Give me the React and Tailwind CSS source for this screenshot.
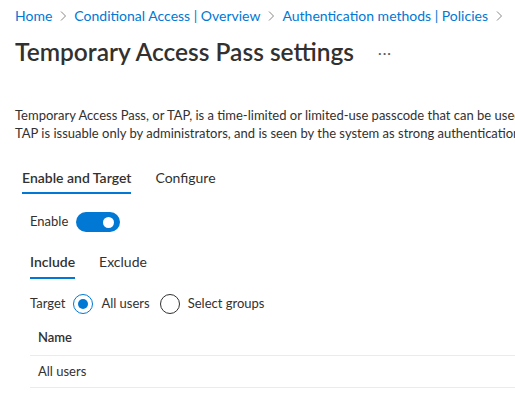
import React from 'react';

const Chevron = () => (
    <svg width="8" height="12" viewBox="0 0 8 12" className="mx-[7px] shrink-0">
        <path d="M2 1.5 L6.5 6 L2 10.5" fill="none" stroke="#8a8886" strokeWidth="1" />
    </svg>
);

const Radio = ({ checked }) => (
    <span className={`flex h-[20px] w-[20px] items-center justify-center rounded-full border ${checked ? 'border-[#0078d4]' : 'border-[#323130]'}`}>
        {checked && <span className="h-[10px] w-[10px] rounded-full bg-[#0078d4]" />}
    </span>
);

const App = () => {
    return (
        <div
            className="h-[401px] w-[515px] overflow-hidden bg-white text-[#323130]"
            style={{ fontFamily: 'Lato, "Noto Sans", sans-serif' }}
        >
            <div className="flex items-center whitespace-nowrap pl-[15px] pt-[6px] text-[14px] leading-[20px] text-[#0078d4]">
                <span>Home</span>
                <Chevron />
                <span>Conditional Access | Overview</span>
                <Chevron />
                <span>Authentication methods | Policies</span>
                <Chevron />
            </div>

            <div className="mt-[10px] flex items-center whitespace-nowrap pl-[15px]">
                <h1 className="text-[24.5px] font-semibold leading-[32px]">Temporary Access Pass settings</h1>
                <span className="ml-[24px] text-[14px] tracking-[1px] text-[#605e5c]">···</span>
            </div>

            <div className="mt-[38px] whitespace-nowrap pl-[15px] text-[13px] leading-[18px]">
                <div>Temporary Access Pass, or TAP, is a time-limited or limited-use passcode that can be used</div>
                <div>TAP is issuable only by administrators, and is seen by the system as strong authentication</div>
            </div>

            <div className="mt-[26px] flex gap-[24px] pl-[22px] text-[14px] leading-[20px]">
                <div className="border-b-2 border-[#0078d4] pb-[4px] font-semibold">Enable and Target</div>
                <div className="pb-[4px]">Configure</div>
            </div>

            <div className="mt-[18px] flex items-center gap-[8px] pl-[30px] text-[13px]">
                <span>Enable</span>
                <span className="flex h-[20px] w-[44px] items-center justify-end rounded-full bg-[#0078d4] pr-[6px]">
                    <span className="h-[11px] w-[11px] rounded-full bg-white" />
                </span>
            </div>

            <div className="mt-[20px] flex gap-[24px] pl-[30px] text-[14px] leading-[20px]">
                <div className="border-b-2 border-[#0078d4] pb-[5px] font-semibold">Include</div>
                <div className="pb-[5px]">Exclude</div>
            </div>

            <div className="mt-[15px] flex items-center pl-[30px] text-[13px]">
                <span>Target</span>
                <span className="ml-[8px]"><Radio checked /></span>
                <span className="ml-[8px]">All users</span>
                <span className="ml-[10px]"><Radio /></span>
                <span className="ml-[8px]">Select groups</span>
            </div>

            <div className="ml-[30px] mt-[6px] text-[13px]">
                <div className="flex h-[36px] items-center border-b border-[#edebe9] pl-[8px] font-semibold">Name</div>
                <div className="flex h-[32px] items-center border-b border-[#edebe9] pl-[8px]">All users</div>
            </div>
        </div>
    );
};

export default App;
